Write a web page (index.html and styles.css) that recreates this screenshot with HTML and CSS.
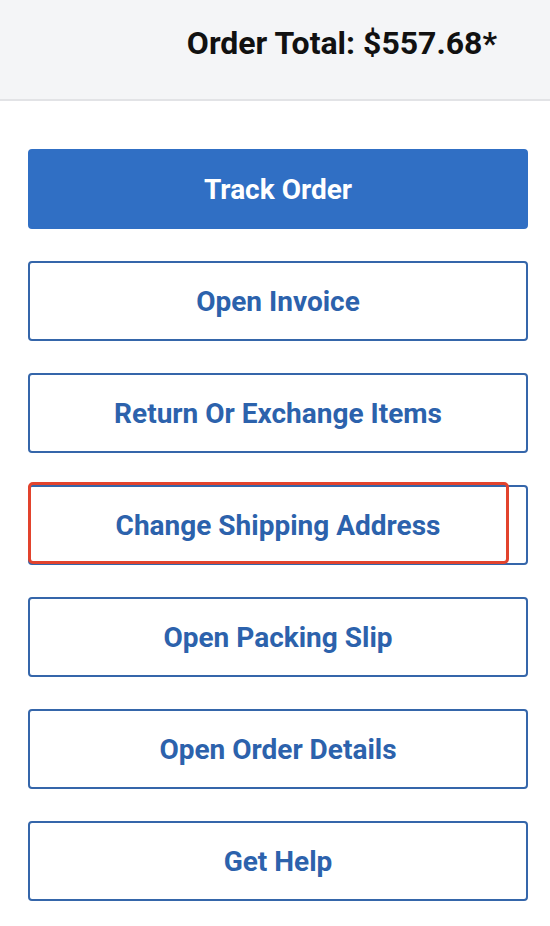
FILE: index.html
```html
<!DOCTYPE html>
<html>
<head>
<meta charset="utf-8">
<link rel="stylesheet" href="styles.css">
</head>
<body>
<header class="summary">
  <div class="total">Order Total: $557.68*</div>
</header>
<main class="actions">
  <button class="btn btn-primary">Track Order</button>
  <button class="btn">Open Invoice</button>
  <button class="btn">Return Or Exchange Items</button>
  <div class="highlight-wrap">
    <button class="btn">Change Shipping Address</button>
    <div class="highlight"></div>
  </div>
  <button class="btn">Open Packing Slip</button>
  <button class="btn">Open Order Details</button>
  <button class="btn">Get Help</button>
</main>
</body>
</html>
```
FILE: styles.css
```css
* { box-sizing: border-box; }
html, body {
  margin: 0;
  padding: 0;
  background: #ffffff;
  font-family: Roboto, "Liberation Sans", Arial, sans-serif;
}
.summary {
  height: 101px;
  background: #f4f5f7;
  border-bottom: 2px solid #e2e3e6;
  display: flex;
  align-items: flex-start;
  justify-content: flex-end;
  padding: 23px 53px 0 0;
}
.total {
  font-size: 32px;
  font-weight: 700;
  color: #111111;
  line-height: 40px;
}
.actions {
  display: flex;
  flex-direction: column;
  gap: 32px;
  padding: 48px 22px 0 28px;
}
.btn {
  display: block;
  width: 100%;
  height: 80px;
  border: 2px solid #3566aa;
  border-radius: 4px;
  background: #ffffff;
  color: #2c62ac;
  font-family: Roboto, "Liberation Sans", Arial, sans-serif;
  font-size: 28px;
  font-weight: 700;
  padding: 0;
  margin: 0;
}
.btn-primary {
  background: #306fc4;
  border-color: #306fc4;
  color: #ffffff;
}
.highlight-wrap {
  position: relative;
}
.highlight {
  position: absolute;
  left: 0;
  top: -3px;
  width: 481px;
  height: 82px;
  border: 3px solid #e2432d;
  border-radius: 5px;
  pointer-events: none;
}
```
